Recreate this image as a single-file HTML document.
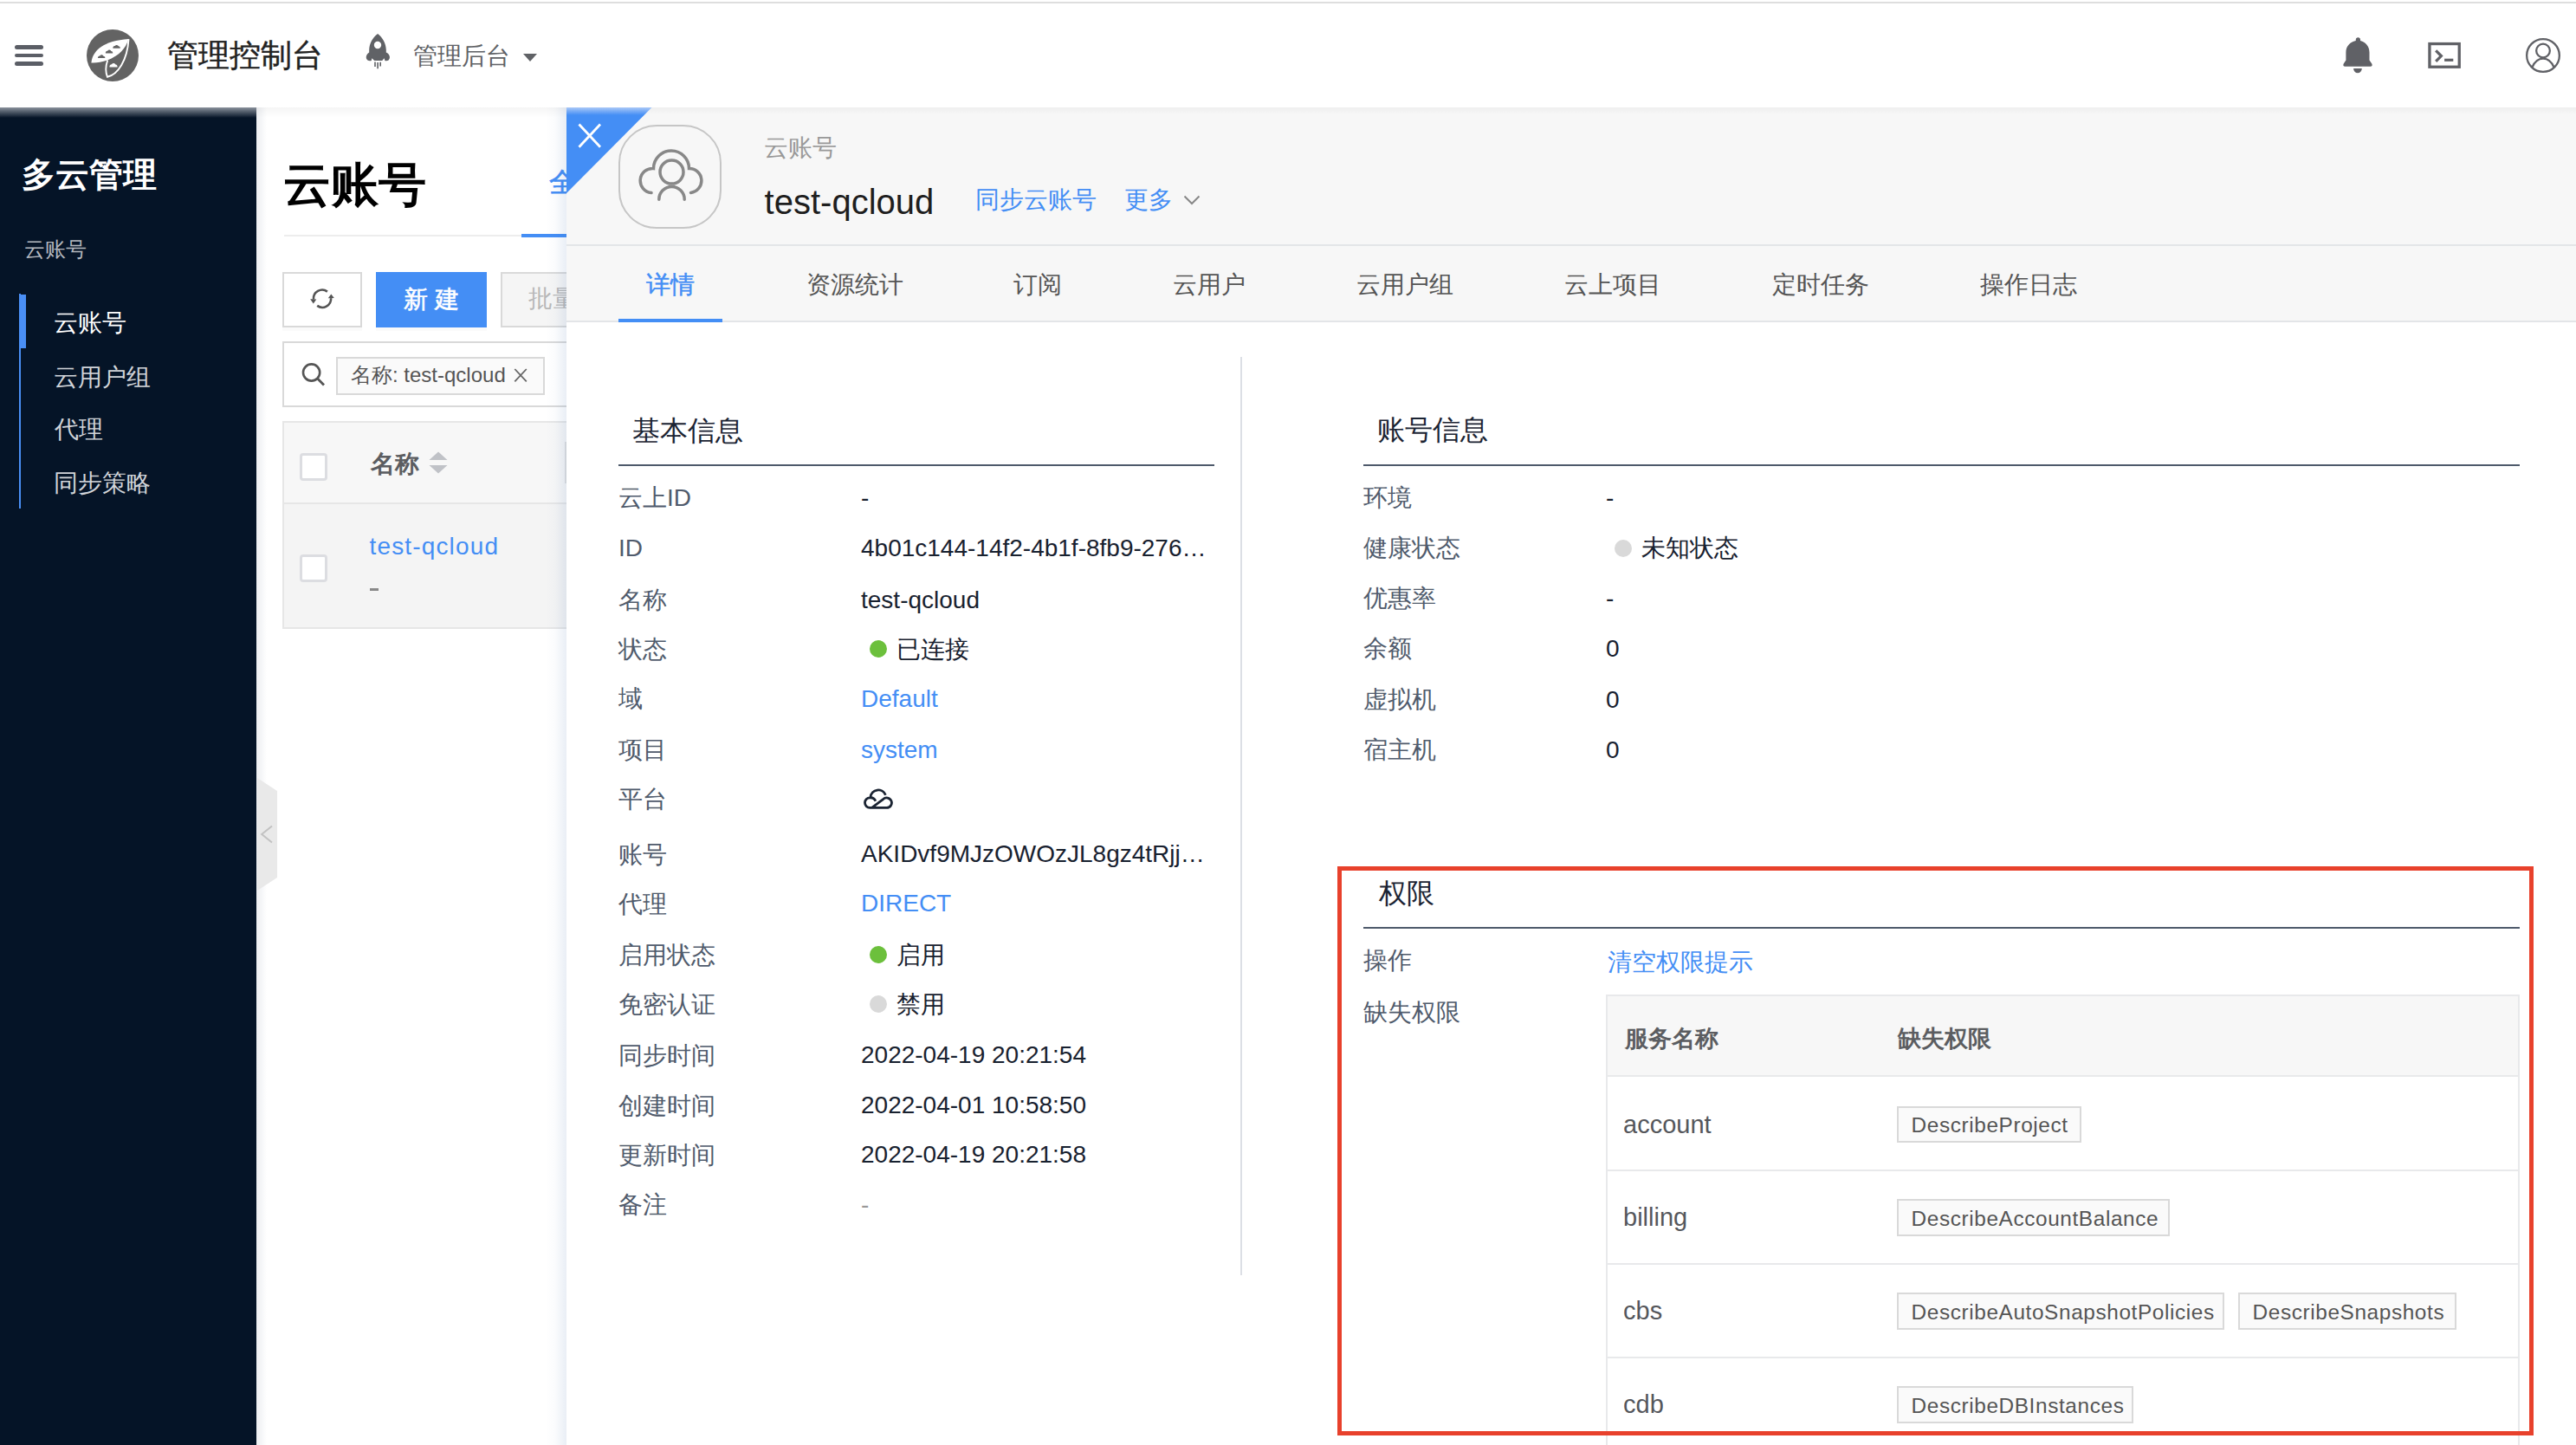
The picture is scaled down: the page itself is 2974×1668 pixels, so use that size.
<!DOCTYPE html>
<html><head><meta charset="utf-8">
<style>
*{margin:0;padding:0;box-sizing:border-box}
html,body{width:2974px;height:1668px;overflow:hidden;background:#fff;font-family:"Liberation Sans",sans-serif;font-size:28px;color:#18212f}
.a{position:absolute;white-space:nowrap;line-height:1}
svg{position:absolute;display:block}
.lb{font-size:28px;color:#505b6c}
.v{font-size:28px;color:#18212f}
.a>.v{font-size:28px}
.th{font-size:27px;font-weight:bold;color:#5b5d61}
.td{font-size:29px;color:#55575c}
.tag{height:42.5px;border:2px solid #d9d9d9;background:#fafafa;font-size:24.4px;letter-spacing:0.6px;color:#555;padding:8.5px 0 0 14.5px}
</style></head><body>
<!-- top header -->
<div class="a" style="left:0;top:2px;width:2974px;height:2px;background:#dedede"></div>
<div class="a" style="left:17px;top:52px;width:33px;height:4.5px;border-radius:3px;background:#5b5e66"></div>
<div class="a" style="left:17px;top:61.5px;width:33px;height:4.5px;border-radius:3px;background:#5b5e66"></div>
<div class="a" style="left:17px;top:71px;width:33px;height:4.5px;border-radius:3px;background:#5b5e66"></div>
<svg style="left:100px;top:34px" width="60" height="60" viewBox="0 0 60 60">
 <circle cx="30" cy="30" r="30" fill="#636363"/>
 <path d="M5.4 38.4C7 24 20 13 48.5 11.1C45 22 38 30 24.2 35.5C17 38 10 38.8 5.4 38.4Z" fill="#fff"/>
 <path d="M24.2 35.5C22 42 22 50 24 54.8C36 52 47 36 48.5 11.1" fill="none" stroke="#fff" stroke-width="1.9"/>
 <path d="M13.00 33.10A2.10 2.10 0 0 1 15.35 30.50A2.27 2.27 0 0 1 19.47 30.70A2.10 2.10 0 0 1 21.40 33.10Z" fill="#636363"/>
 <path d="M21.90 27.40A2.10 2.10 0 0 1 24.25 24.80A2.27 2.27 0 0 1 28.37 25.00A2.10 2.10 0 0 1 30.30 27.40Z" fill="#636363"/>
 <path d="M30.40 21.70A2.10 2.10 0 0 1 32.75 19.10A2.27 2.27 0 0 1 36.87 19.30A2.10 2.10 0 0 1 38.80 21.70Z" fill="#636363"/>
 <path d="M26.50 43.50A2.60 2.60 0 0 1 29.02 40.28A2.43 2.43 0 0 1 33.43 40.52A2.60 2.60 0 0 1 35.50 43.50Z" fill="#fff"/>
</svg>
<div class="a" style="left:193px;top:45.5px;font-size:36px;color:#222;-webkit-text-stroke:0.4px #222">管理控制台</div>
<svg style="left:414px;top:34px" width="44" height="52" viewBox="0 0 44 52">
 <path d="M22.1 5C16 9.5 12.4 16.5 12.2 23.5V26.6C8.6 28.6 7.6 33.6 10.4 35.6C11.6 36.4 13.6 36.4 14.8 36L15.4 33.2L18.2 36H27.2L29.6 33.2L30.4 36C31.8 36.4 33.6 36.2 34.6 35.4C37.2 33.2 36 28.4 31.8 26.6V23.5C31.6 16.5 28 9.5 22.1 5Z" fill="#606266"/>
 <circle cx="22" cy="18" r="4.2" fill="#fff"/>
 <path d="M19 37.6V43M22.1 38V45.3M25.2 37.8V42.4" stroke="#606266" stroke-width="1.6"/>
</svg>
<div class="a" style="left:476.5px;top:50.5px;font-size:28px;color:#606266">管理后台</div>
<svg style="left:604px;top:62px" width="16" height="9" viewBox="0 0 16 9"><path d="M0 0H16L8 9Z" fill="#606266"/></svg>

<svg style="left:2696px;top:36px" width="52" height="56" viewBox="0 0 52 56">
 <path d="M26.4 7.2a2.6 2.6 0 0 1 2.6 2.6v1.3C35 12.6 39.5 17.6 39.5 24.5V33.5L42.4 37.8Q43.4 40.7 40.6 40.7H11.4Q8.6 40.7 9.6 37.8L12.4 33.5V24.5C12.4 17.6 17 12.6 23.8 11.1V9.8A2.6 2.6 0 0 1 26.4 7.2Z" fill="#606166"/>
 <path d="M21.1 43H30.8A4.85 5.2 0 0 1 21.1 43Z" fill="#606166"/>
</svg>
<svg style="left:2796px;top:40px" width="52" height="48" viewBox="0 0 52 48">
 <rect x="8.95" y="10.55" width="34.3" height="26.7" fill="none" stroke="#606166" stroke-width="3.3"/>
 <path d="M16.2 18.4L22.4 24.6L16.2 30.8" fill="none" stroke="#606166" stroke-width="3.2"/>
 <rect x="26.1" y="27.7" width="10.2" height="3.2" fill="#606166"/>
</svg>
<svg style="left:2910px;top:38px" width="52" height="52" viewBox="0 0 52 52">
 <circle cx="26" cy="26" r="18.85" fill="none" stroke="#606166" stroke-width="2.3"/>
 <circle cx="26" cy="20.5" r="7.85" fill="none" stroke="#606166" stroke-width="2.3"/>
 <path d="M13.4 39.8C16 33.5 20.5 29.6 26 29.6C31.5 29.6 36 33.5 38.6 39.8" fill="none" stroke="#606166" stroke-width="2.3"/>
</svg>
<!-- sidebar -->
<div class="a" style="left:0;top:124px;width:296px;height:1544px;background:#051427"></div>
<div class="a" style="left:24.5px;top:183px;font-size:38.5px;font-weight:bold;color:#fff">多云管理</div>
<div class="a" style="left:28px;top:276px;font-size:24px;color:#b4b8bf">云账号</div>
<div class="a" style="left:22px;top:339px;width:2px;height:248px;background:#4a8ff5"></div>
<div class="a" style="left:22px;top:340px;width:8px;height:62px;background:#4a8ff5"></div>
<div class="a" style="left:62px;top:359px;font-size:28px;color:#fff">云账号</div>
<div class="a" style="left:62px;top:421.5px;font-size:28px;color:#d0d3d8">云用户组</div>
<div class="a" style="left:62.5px;top:482px;font-size:28px;color:#d0d3d8">代理</div>
<div class="a" style="left:62px;top:543.5px;font-size:28px;color:#d0d3d8">同步策略</div>

<!-- main list -->
<div class="a" style="left:296px;top:124px;width:12px;height:1544px;background:linear-gradient(90deg,#eceef1,rgba(255,255,255,0))"></div>
<svg style="left:296px;top:896px" width="26" height="134" viewBox="0 0 26 134">
 <path d="M1 2L24 17V117L1 132Z" fill="#e9e9e9"/>
 <path d="M18 57.5L6.2 67L18 76.5" fill="none" stroke="#c2c2c2" stroke-width="2"/>
</svg>
<div class="a" style="left:0;top:124px;width:296px;height:12px;background:linear-gradient(180deg,#8a929c,rgba(5,20,39,0))"></div>
<div class="a" style="left:327px;top:185.5px;font-size:55px;font-weight:bold;color:#000">云账号</div>
<div class="a" style="left:328px;top:271px;width:330px;height:2px;background:#ededed"></div>
<div class="a" style="left:602px;top:269.5px;width:56px;height:4.5px;background:#448ef5"></div>
<div class="a" style="left:634px;top:195px;font-size:31px;color:#448ef5;-webkit-text-stroke:0.6px #448ef5">全部</div>
<div class="a" style="left:296px;top:124px;width:358px;height:12px;background:linear-gradient(180deg,rgba(0,0,0,0.04),rgba(0,0,0,0))"></div>
<!-- toolbar -->
<div class="a" style="left:326px;top:314px;width:92px;height:64px;border:2px solid #d9d9d9;background:#fff;box-shadow:0 4px 0 rgba(0,0,0,0.018)"></div>
<svg style="left:350px;top:326px" width="44" height="36" viewBox="0 0 44 36">
 <path d="M27.9 10.6A10 10 0 0 0 12 19.6" fill="none" stroke="#555" stroke-width="2.6"/>
 <path d="M8.2 19.3L15.3 19.5L11.8 24.4Z" fill="#555"/>
 <path d="M16.2 26.9A10 10 0 0 0 32.1 18.2" fill="none" stroke="#555" stroke-width="2.6"/>
 <path d="M28.8 18.2L35.8 18L32.3 13.4Z" fill="#555"/>
</svg>
<div class="a" style="left:434px;top:314px;width:128px;height:64px;background:#448ef5;box-shadow:0 4px 0 rgba(0,0,0,0.018)"></div>
<div class="a" style="left:466px;top:332px;font-size:28px;color:#fff;-webkit-text-stroke:0.6px #fff">新 建</div>
<div class="a" style="left:578px;top:314px;width:90px;height:64px;border:2px solid #d9d9d9;background:#f5f5f5"></div>
<div class="a" style="left:610px;top:331px;font-size:28px;color:#b8b8b8">批量</div>
<!-- search -->
<div class="a" style="left:326px;top:394px;width:340px;height:76px;border:2px solid #d9d9d9;background:#fff"></div>
<svg style="left:344px;top:414px" width="36" height="36" viewBox="0 0 36 36">
 <circle cx="15.6" cy="16" r="9.6" fill="none" stroke="#555" stroke-width="2.6"/>
 <path d="M22.6 23L30 30.4" stroke="#555" stroke-width="2.8"/>
</svg>
<div class="a" style="left:388px;top:412px;width:241px;height:44px;border:2px solid #d9d9d9;background:#fafafa"></div>
<div class="a" style="left:405px;top:421px;font-size:24px;color:#555">名称: test-qcloud</div>
<svg style="left:592px;top:424px" width="18" height="18" viewBox="0 0 18 18"><path d="M2.3 2L15.8 16.3M15.8 2L2.3 16.3" stroke="#666" stroke-width="1.8"/></svg>
<!-- table -->
<div class="a" style="left:326px;top:486px;width:340px;height:240px;border:2px solid #e6e6e6;background:#f4f4f4"></div>
<div class="a" style="left:328px;top:488px;width:338px;height:93.5px;background:#f7f7f7;border-bottom:2px solid #e6e6e6"></div>
<div class="a" style="left:346px;top:523px;width:32px;height:32px;border:3px solid #dcdde1;border-radius:4px;background:#fff"></div>
<div class="a" style="left:346px;top:640px;width:32px;height:32px;border:3px solid #dcdde1;border-radius:4px;background:#fff"></div>
<div class="a" style="left:428px;top:521.5px;font-size:28px;font-weight:bold;color:#5b5d61">名称</div>
<svg style="left:494px;top:520px" width="24" height="28" viewBox="0 0 24 28"><path d="M12 1.5L22.5 11H1.5Z M12 26.5L22.5 17H1.5Z" fill="#c0c2c7"/></svg>
<div class="a" style="left:652px;top:510px;width:2px;height:48px;background:#e0e0e0"></div>
<div class="a" style="left:426.5px;top:616.5px;font-size:28px;letter-spacing:1.15px;color:#448ef5">test-qcloud</div>
<div class="a" style="left:427px;top:679px;width:10px;height:2.5px;background:#888"></div>

<!-- drawer -->
<div class="a" style="left:630px;top:124px;width:24px;height:1544px;background:linear-gradient(90deg,rgba(40,90,160,0),rgba(40,90,160,0.02) 45%,rgba(40,90,160,0.1))"></div>
<div class="a" style="left:654px;top:124px;width:2320px;height:1544px;background:#fff"></div>
<div class="a" style="left:654px;top:124px;width:2320px;height:248px;background:#f7f7f7"></div>
<div class="a" style="left:654px;top:124px;width:2320px;height:8px;background:linear-gradient(180deg,rgba(0,0,0,0.035),rgba(0,0,0,0))"></div>
<div class="a" style="left:654px;top:282px;width:2320px;height:2px;background:#e3e5e8"></div>
<div class="a" style="left:654px;top:370px;width:2320px;height:2px;background:#e3e5e8"></div>
<svg style="left:654px;top:124px" width="100" height="100" viewBox="0 0 100 100">
 <defs><linearGradient id="tg" x1="0" y1="0" x2="0" y2="1"><stop offset="0" stop-color="#a9c8f7"/><stop offset="0.09" stop-color="#448ef5"/><stop offset="1" stop-color="#448ef5"/></linearGradient></defs>
 <path d="M0 0H98.5L0 99Z" fill="url(#tg)"/>
 <path d="M14.5 19.5L39 45.8M39 19.5L14.5 45.8" stroke="#fff" stroke-width="2.8"/>
</svg>
<div class="a" style="left:714px;top:144px;width:119px;height:119.5px;border:2px solid #c6c6c6;border-radius:44px"></div>
<svg style="left:714px;top:144px" width="120" height="120" viewBox="0 0 120 120">
 <g fill="none" stroke="#888" stroke-width="3.5" stroke-linecap="round">
 <path d="M38 78.5A14 14 0 0 1 40.5 50.5A20.5 20.5 0 0 1 81.5 50.5A14 14 0 0 1 83.5 78.4"/>
 <circle cx="61.5" cy="54.6" r="13.5"/>
 <path d="M46.8 86.2A14.6 14.6 0 0 1 76.2 86.2"/>
 </g>
</svg>
<div class="a" style="left:882px;top:157px;font-size:28px;color:#999">云账号</div>
<div class="a" style="left:882.6px;top:212.5px;font-size:40px;color:#1e1e1e">test-qcloud</div>
<div class="a" style="left:1126px;top:217px;font-size:28px;color:#448ef5">同步云账号</div>
<div class="a" style="left:1298px;top:217px;font-size:28px;color:#448ef5">更多</div>
<svg style="left:1364px;top:222px" width="24" height="18" viewBox="0 0 24 18"><path d="M3.5 4.5L12 13L20.5 4.5" fill="none" stroke="#888" stroke-width="2"/></svg>
<!-- tabs -->
<div class="a" style="left:746px;top:315px;font-size:28px;color:#448ef5;-webkit-text-stroke:0.5px #448ef5">详情</div>
<div class="a" style="left:714px;top:368px;width:120px;height:4px;background:#448ef5"></div>
<div class="a" style="left:931px;top:315px;font-size:28px;color:#555">资源统计</div>
<div class="a" style="left:1170px;top:315px;font-size:28px;color:#555">订阅</div>
<div class="a" style="left:1354px;top:315px;font-size:28px;color:#555">云用户</div>
<div class="a" style="left:1566px;top:315px;font-size:28px;color:#555">云用户组</div>
<div class="a" style="left:1806px;top:315px;font-size:28px;color:#555">云上项目</div>
<div class="a" style="left:2046px;top:315px;font-size:28px;color:#555">定时任务</div>
<div class="a" style="left:2286px;top:315px;font-size:28px;color:#555">操作日志</div>
<!-- body -->
<div class="a" style="left:1432px;top:412px;width:2px;height:1060px;background:#dcdfe5"></div>
<div class="a" style="left:730px;top:481px;font-size:32px;color:#1b2433">基本信息</div>
<div class="a" style="left:714px;top:536px;width:688px;height:2px;background:#4e5a6b"></div>
<div class="a lb" style="left:714px;top:561px">云上ID</div>
<div class="a" style="left:994px;top:561px"><span class="v">-</span></div>
<div class="a lb" style="left:714px;top:619px">ID</div>
<div class="a" style="left:994px;top:619px"><span class="v">4b01c144-14f2-4b1f-8fb9-276…</span></div>
<div class="a lb" style="left:714px;top:679px">名称</div>
<div class="a" style="left:994px;top:679px"><span class="v">test-qcloud</span></div>
<div class="a lb" style="left:714px;top:736px">状态</div>
<div class="a" style="left:1004px;top:739px;width:20px;height:20px;border-radius:50%;background:#6cc03c"></div>
<div class="a" style="left:1035px;top:736px"><span class="v">已连接</span></div>
<div class="a lb" style="left:714px;top:793px">域</div>
<div class="a" style="left:994px;top:793px"><span class="v" style="color:#448ef5">Default</span></div>
<div class="a lb" style="left:714px;top:852px">项目</div>
<div class="a" style="left:994px;top:852px"><span class="v" style="color:#448ef5">system</span></div>
<div class="a lb" style="left:714px;top:909px">平台</div>
<svg style="left:994px;top:906px" width="40" height="32" viewBox="0 0 40 32">
 <g fill="none" stroke="#1b2433" stroke-width="2.8">
 <path d="M12.6 26.4L25.6 16.6A5.75 5.75 0 1 1 29.65 26.4H10.3A5.8 5.8 0 0 1 10.3 14.8A6.6 6.6 0 0 1 16.9 18.7"/>
 <path d="M11 14.2A9 9 0 0 1 28.4 11.8"/>
 </g>
</svg>
<div class="a lb" style="left:714px;top:972.5px">账号</div>
<div class="a" style="left:994px;top:971.5px"><span class="v">AKIDvf9MJzOWOzJL8gz4tRjj…</span></div>
<div class="a lb" style="left:714px;top:1030px">代理</div>
<div class="a" style="left:994px;top:1029px"><span class="v" style="color:#448ef5">DIRECT</span></div>
<div class="a lb" style="left:714px;top:1088.5px">启用状态</div>
<div class="a" style="left:1004px;top:1091.5px;width:20px;height:20px;border-radius:50%;background:#6cc03c"></div>
<div class="a" style="left:1035px;top:1088.5px"><span class="v">启用</span></div>
<div class="a lb" style="left:714px;top:1146px">免密认证</div>
<div class="a" style="left:1004px;top:1149px;width:20px;height:20px;border-radius:50%;background:#d9d9d9"></div>
<div class="a" style="left:1035px;top:1146px"><span class="v">禁用</span></div>
<div class="a lb" style="left:714px;top:1205px">同步时间</div>
<div class="a" style="left:994px;top:1204px"><span class="v">2022-04-19 20:21:54</span></div>
<div class="a lb" style="left:714px;top:1262.5px">创建时间</div>
<div class="a" style="left:994px;top:1261.5px"><span class="v">2022-04-01 10:58:50</span></div>
<div class="a lb" style="left:714px;top:1320px">更新时间</div>
<div class="a" style="left:994px;top:1319px"><span class="v">2022-04-19 20:21:58</span></div>
<div class="a lb" style="left:714px;top:1377px">备注</div>
<div class="a" style="left:994px;top:1377px"><span class="v" style="color:#999">-</span></div>
<div class="a" style="left:1590px;top:480px;font-size:32px;color:#1b2433">账号信息</div>
<div class="a" style="left:1574px;top:536px;width:1335px;height:2px;background:#4e5a6b"></div>
<div class="a lb" style="left:1574px;top:561px">环境</div>
<div class="a v" style="left:1854px;top:561px">-</div>
<div class="a lb" style="left:1574px;top:619px">健康状态</div>
<div class="a" style="left:1864px;top:623px;width:20px;height:20px;border-radius:50%;background:#d9d9d9"></div>
<div class="a v" style="left:1895px;top:619px">未知状态</div>
<div class="a lb" style="left:1574px;top:677px">优惠率</div>
<div class="a v" style="left:1854px;top:677px">-</div>
<div class="a lb" style="left:1574px;top:734.5px">余额</div>
<div class="a v" style="left:1854px;top:734.5px">0</div>
<div class="a lb" style="left:1574px;top:794px">虚拟机</div>
<div class="a v" style="left:1854px;top:794px">0</div>
<div class="a lb" style="left:1574px;top:852px">宿主机</div>
<div class="a v" style="left:1854px;top:852px">0</div>
<div class="a" style="left:1592px;top:1014.5px;font-size:32px;color:#1b2433">权限</div>
<div class="a" style="left:1574px;top:1070px;width:1335px;height:2px;background:#4e5a6b"></div>
<div class="a lb" style="left:1574px;top:1095px">操作</div>
<div class="a" style="left:1856px;top:1097px;font-size:28px;color:#448ef5">清空权限提示</div>
<div class="a lb" style="left:1574px;top:1155px">缺失权限</div>
<div class="a" style="left:1854px;top:1148px;width:1055px;height:520px;border:2px solid #e8e9eb;border-bottom:none;background:#fff"></div>
<div class="a" style="left:1856px;top:1150px;width:1051px;height:93px;background:#f7f7f7;border-bottom:2px solid #e8e9eb"></div>
<div class="a th" style="left:1876px;top:1186px">服务名称</div>
<div class="a th" style="left:2191px;top:1185.5px">缺失权限</div>
<div class="a" style="left:1856px;top:1350px;width:1051px;height:2px;background:#e8e9eb"></div>
<div class="a" style="left:1856px;top:1457.5px;width:1051px;height:2px;background:#e8e9eb"></div>
<div class="a" style="left:1856px;top:1565.5px;width:1051px;height:2px;background:#e8e9eb"></div>
<div class="a td" style="left:1874px;top:1283.5px">account</div>
<div class="a tag" style="left:2190px;top:1276.5px;width:213px">DescribeProject</div>
<div class="a td" style="left:1874px;top:1391px">billing</div>
<div class="a tag" style="left:2190px;top:1384px;width:315px">DescribeAccountBalance</div>
<div class="a td" style="left:1874px;top:1499px">cbs</div>
<div class="a tag" style="left:2190px;top:1492px;width:378px">DescribeAutoSnapshotPolicies</div>
<div class="a tag" style="left:2584px;top:1492px;width:252px">DescribeSnapshots</div>
<div class="a td" style="left:1874px;top:1607px">cdb</div>
<div class="a tag" style="left:2190px;top:1600px;width:273px">DescribeDBInstances</div>
<div class="a" style="left:1544px;top:1000px;width:1381px;height:657px;border:5px solid #e8412c"></div>

</body></html>
